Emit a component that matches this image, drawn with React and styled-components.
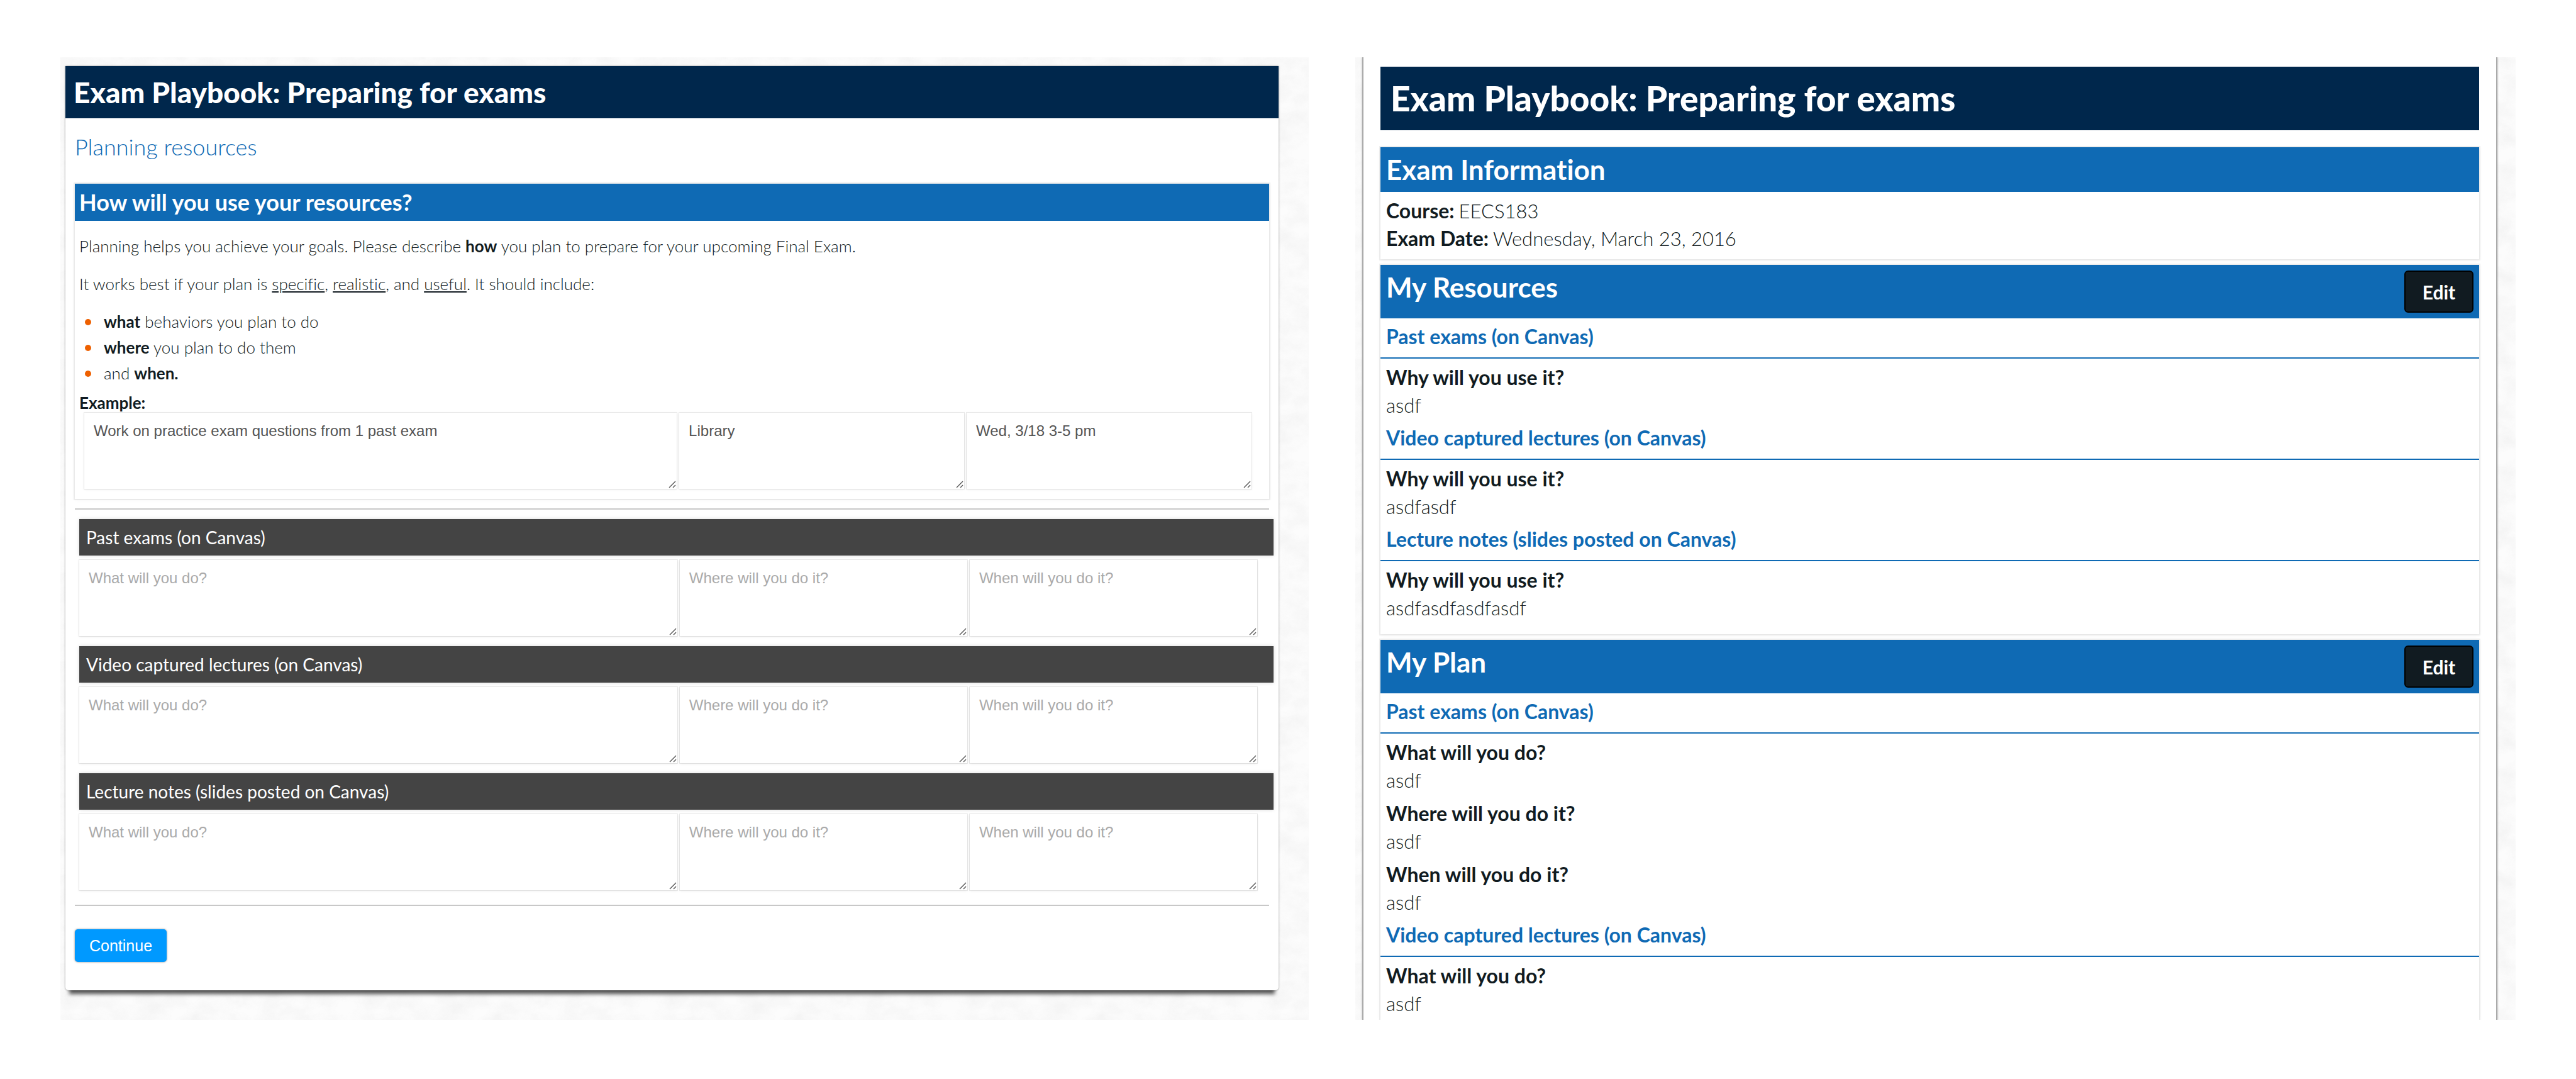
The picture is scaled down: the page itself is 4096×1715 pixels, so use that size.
import React from 'react';
import styled, { createGlobalStyle } from 'styled-components';

const color = {
  navy: '#00274c',
  blue: '#0f6ab4',
  charcoal: '#444444',
  ink: '#111b21',
  action: '#0099ff',
  bullet: '#ee6000',
  rule: '#c8c8c8',
};

const svgUrl = (markup) => `url("data:image/svg+xml,${encodeURIComponent(markup)}")`;

const paper = svgUrl(
  '<svg xmlns="http://www.w3.org/2000/svg" width="480" height="480"><filter id="n" x="0" y="0" width="100%" height="100%"><feTurbulence type="fractalNoise" baseFrequency="0.025 0.035" numOctaves="4" stitchTiles="stitch"/><feColorMatrix values="0 0 0 0 0.9 0 0 0 0 0.9 0 0 0 0 0.9 1.6 0 0 0 -0.5"/></filter><rect width="480" height="480" filter="url(#n)"/></svg>'
);

const grip = svgUrl(
  '<svg xmlns="http://www.w3.org/2000/svg" width="15" height="15"><path d="M3 13L13 3M9 13L13 9" stroke="#555555" stroke-width="1.4" fill="none"/></svg>'
);

const GlobalStyle = createGlobalStyle`
  *, *::before, *::after { box-sizing: border-box; }
  body {
    margin: 0;
    background: #ffffff;
    color: ${color.ink};
    font-family: Lato, 'Open Sans', sans-serif;
    font-variant-ligatures: none;
  }
  h1, h2, h3, p, ul, dl, dd { margin: 0; padding: 0; }
  b { font-weight: 700; }
`;

const Page = styled.main`
  display: grid;
  grid-template-columns: 1985fr 1845fr;
  gap: 74px;
  padding: 91px 96px 93px;
`;

const Screen = styled.section`
  display: flex;
  flex-direction: column;
  overflow: hidden;
  background: #fcfcfc ${paper};
  padding: ${(p) => (p.$framed ? '0 29px 0 11px' : '14px 48px 47px 8px')};
`;

/* Planning form */

const Card = styled.form`
  background: #ffffff;
  border-radius: 0 0 5px 5px;
  box-shadow: 0 0 3px rgba(0, 0, 0, 0.45), 0 12px 6px -6px rgba(0, 0, 0, 0.65);
`;

const CardBody = styled.div`
  padding: 0 15px 45px;
`;

const Title = styled.h1`
  background: ${color.navy};
  color: #ffffff;
  font-weight: 900;
  font-size: ${(p) => (p.$large ? 55 : 46)}px;
  line-height: ${(p) => (p.$large ? 101 : 83)}px;
  padding: 0 ${(p) => (p.$large ? 16 : 13)}px;
`;

const Subtitle = styled.p`
  color: ${color.blue};
  font-weight: 300;
  font-size: 36px;
  line-height: 44px;
  padding: 23px 0 37px;
`;

const Panel = styled.section`
  background: #ffffff;
  box-shadow: 0 0 0 2px rgba(0, 0, 0, 0.06), 0 1px 6px rgba(0, 0, 0, 0.06);
`;

const PanelTitle = styled.h2`
  background: ${color.blue};
  color: #ffffff;
  font-weight: 700;
  font-size: 36px;
  line-height: 59px;
  padding: 0 7px;
`;

const Instructions = styled.div`
  padding: 20px 7px 0;
  font-weight: 300;
  font-size: 26px;
  line-height: 41px;
`;

const Paragraph = styled.p`
  margin-bottom: 19px;
`;

const Bullets = styled.ul`
  list-style: none;
`;

const Bullet = styled.li`
  display: flex;
  align-items: center;
  gap: 20px;
  padding-left: 9px;

  &::before {
    content: '';
    width: 10px;
    height: 10px;
    border-radius: 50%;
    background: ${color.bullet};
  }
`;

const ExampleTitle = styled.h3`
  margin-top: 10px;
  font-weight: 700;
  font-size: 26px;
  line-height: 32px;
`;

const Fields = styled.div`
  display: grid;
  grid-template-columns: 208fr 100fr 100fr;
  gap: 4px;
  padding: ${(p) => (p.$example ? '0 28px 16px 15px' : '7px 19px 16px 7px')};
`;

const Field = styled.textarea`
  display: block;
  width: 100%;
  height: 121px;
  margin: 0;
  border: 0;
  padding: 15px;
  background: #ffffff;
  color: #555555;
  font-family: 'Liberation Sans', Arial, sans-serif;
  font-size: 24px;
  line-height: 28px;
  resize: both;
  box-shadow: 0 0 0 1px rgba(0, 0, 0, 0.08), 0 1px 4px rgba(0, 0, 0, 0.08);

  &::placeholder {
    color: #aaaaaa;
    opacity: 1;
  }

  &::-webkit-resizer {
    background: ${grip} no-repeat right bottom;
  }
`;

const Rule = styled.hr`
  height: 2px;
  border: 0;
  background: ${color.rule};
  margin: ${(p) => (p.$closing ? '7px 0 37px' : '15px 0')};
`;

const ResourceTitle = styled.h3`
  margin: 0 -7px 0 7px;
  background: ${color.charcoal};
  color: #ffffff;
  font-weight: 400;
  font-size: 28px;
  line-height: 58px;
  padding: 0 11px;
  box-shadow: 0 0 6px rgba(0, 0, 0, 0.15);
`;

const ContinueButton = styled.button`
  display: block;
  height: 52px;
  border: 0;
  border-radius: 5px;
  padding: 0 23px;
  background: ${color.action};
  color: #ffffff;
  font-family: 'Liberation Sans', Arial, sans-serif;
  font-size: 25px;
  box-shadow: 0 0 3px rgba(0, 0, 0, 0.5);
`;

/* Summary */

const Sheet = styled.div`
  flex: 1;
  display: flex;
  flex-direction: column;
  gap: 9px;
  background: #ffffff;
  border: solid #aaaaaa;
  border-width: 0 2px;
  padding: 15px 27px 0;
  box-shadow: 0 0 3px rgba(0, 0, 0, 0.25);
`;

const SheetHeader = styled.header`
  margin-bottom: 18px;
`;

const Summary = styled(Panel)`
  flex: ${(p) => (p.$continues ? 1 : 'none')};
  padding-bottom: ${(p) => (p.$continues ? 0 : p.$short ? 11 : 19)}px;
`;

const SummaryBar = styled.div`
  display: flex;
  justify-content: space-between;
  align-items: flex-start;
  background: ${color.blue};
  color: #ffffff;
  padding: 0 9px;
`;

const SummaryTitle = styled.h2`
  font-weight: 700;
  font-size: 44px;
  line-height: 71px;
`;

const EditButton = styled.button`
  width: 110px;
  height: 67px;
  margin: 9px 0;
  border: 2px solid #000000;
  border-radius: 6px;
  padding: 0;
  background: ${color.ink};
  color: #ffffff;
  font-family: Lato, 'Open Sans', sans-serif;
  font-weight: 700;
  font-size: 30px;
`;

const Facts = styled.dl`
  padding: 8px 9px 0;
  line-height: 44px;
`;

const Fact = styled.div`
  display: flex;
  gap: 7px;
`;

const Term = styled.dt`
  font-weight: 700;
  font-size: 32px;
`;

const Value = styled.dd`
  font-weight: 300;
  font-size: 31px;
`;

const TopicTitle = styled.h3`
  border-bottom: 2px solid ${color.blue};
  padding: 0 9px 4px;
  color: ${color.blue};
  font-weight: 700;
  font-size: 32px;
  line-height: 58px;
`;

const Answer = styled.div`
  padding: 8px 9px 1px;
  line-height: 44px;
`;

const resources = [
  'Past exams (on Canvas)',
  'Video captured lectures (on Canvas)',
  'Lecture notes (slides posted on Canvas)',
];

const prompts = ['What will you do?', 'Where will you do it?', 'When will you do it?'];

const example = ['Work on practice exam questions from 1 past exam', 'Library', 'Wed, 3/18 3-5 pm'];

const reasons = ['asdf', 'asdfasdf', 'asdfasdfasdfasdf'];

const plans = [
  { resource: resources[0], answers: prompts.map((prompt) => [prompt, 'asdf']) },
  { resource: resources[1], answers: [[prompts[0], 'asdf']] },
];

function Topic({ title, answers }) {
  return (
    <>
      <TopicTitle>{title}</TopicTitle>
      <dl>
        {answers.map(([question, answer]) => (
          <Answer key={question}>
            <Term>{question}</Term>
            <Value>{answer}</Value>
          </Answer>
        ))}
      </dl>
    </>
  );
}

function PlanningForm() {
  return (
    <Card onSubmit={(event) => event.preventDefault()}>
      <Title>Exam Playbook: Preparing for exams</Title>
      <CardBody>
        <Subtitle>Planning resources</Subtitle>
        <Panel>
          <PanelTitle>How will you use your resources?</PanelTitle>
          <Instructions>
            <Paragraph>
              Planning helps you achieve your goals. Please describe <b>how</b> you plan to prepare for your
              upcoming Final Exam.
            </Paragraph>
            <Paragraph>
              It works best if your plan is <u>specific</u>, <u>realistic</u>, and <u>useful</u>. It should
              include:
            </Paragraph>
            <Bullets>
              <Bullet><span><b>what</b> behaviors you plan to do</span></Bullet>
              <Bullet><span><b>where</b> you plan to do them</span></Bullet>
              <Bullet><span>and <b>when.</b></span></Bullet>
            </Bullets>
            <ExampleTitle>Example:</ExampleTitle>
          </Instructions>
          <Fields $example>
            {example.map((text, i) => (
              <Field key={text} aria-label={`Example: ${prompts[i]}`} defaultValue={text} />
            ))}
          </Fields>
        </Panel>
        <Rule />
        {resources.map((resource) => (
          <React.Fragment key={resource}>
            <ResourceTitle>{resource}</ResourceTitle>
            <Fields>
              {prompts.map((prompt) => (
                <Field key={prompt} aria-label={`${resource}: ${prompt}`} placeholder={prompt} />
              ))}
            </Fields>
          </React.Fragment>
        ))}
        <Rule $closing />
        <ContinueButton type="submit">Continue</ContinueButton>
      </CardBody>
    </Card>
  );
}

function PlaybookSummary() {
  return (
    <Sheet>
      <SheetHeader>
        <Title $large>Exam Playbook: Preparing for exams</Title>
      </SheetHeader>
      <Summary $short>
        <SummaryBar>
          <SummaryTitle>Exam Information</SummaryTitle>
        </SummaryBar>
        <Facts>
          <Fact>
            <Term>Course:</Term>
            <Value>EECS183</Value>
          </Fact>
          <Fact>
            <Term>Exam Date:</Term>
            <Value>Wednesday, March 23, 2016</Value>
          </Fact>
        </Facts>
      </Summary>
      <Summary>
        <SummaryBar>
          <SummaryTitle>My Resources</SummaryTitle>
          <EditButton type="button">Edit</EditButton>
        </SummaryBar>
        {resources.map((resource, i) => (
          <Topic key={resource} title={resource} answers={[['Why will you use it?', reasons[i]]]} />
        ))}
      </Summary>
      <Summary $continues>
        <SummaryBar>
          <SummaryTitle>My Plan</SummaryTitle>
          <EditButton type="button">Edit</EditButton>
        </SummaryBar>
        {plans.map(({ resource, answers }) => (
          <Topic key={resource} title={resource} answers={answers} />
        ))}
      </Summary>
    </Sheet>
  );
}

export default function App() {
  return (
    <>
      <GlobalStyle />
      <Page>
        <Screen>
          <PlanningForm />
        </Screen>
        <Screen $framed>
          <PlaybookSummary />
        </Screen>
      </Page>
    </>
  );
}
